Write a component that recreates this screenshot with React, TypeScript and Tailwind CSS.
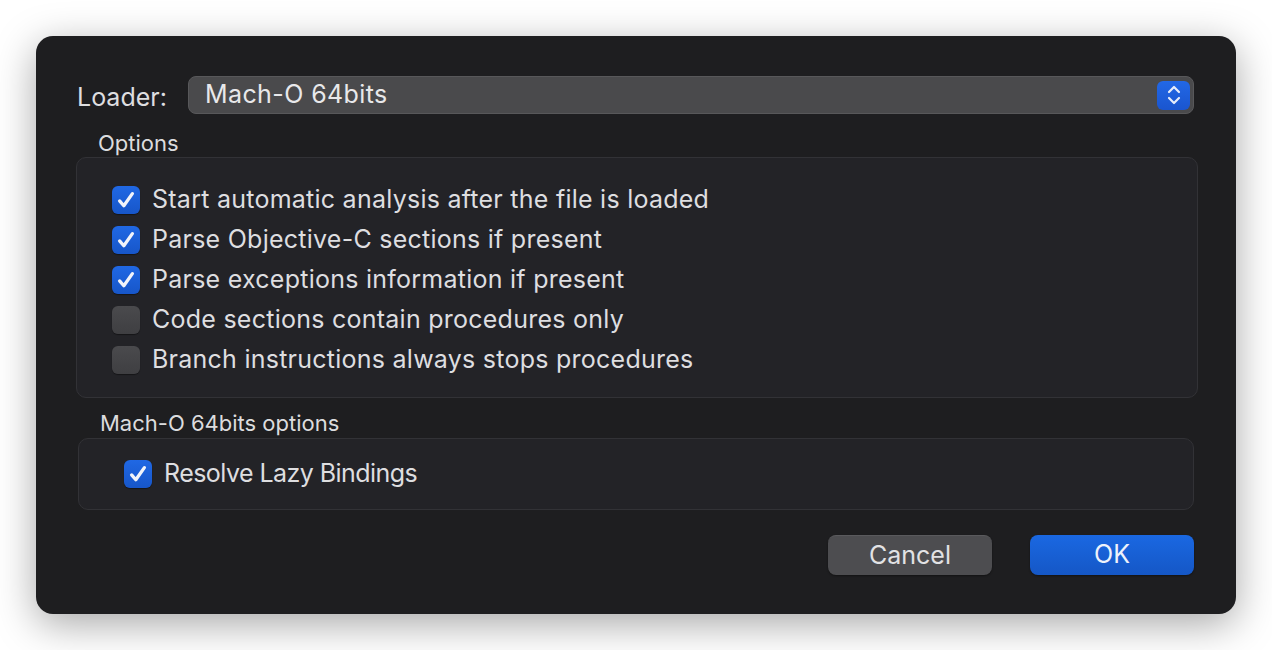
import React from "react";

const font = { fontFamily: "Inter, 'Noto Sans', sans-serif" };

const CheckBox: React.FC<{ checked: boolean }> = ({ checked }) =>
  checked ? (
    <div className="w-[28px] h-[28px] rounded-[6px] bg-gradient-to-b from-[#2068e4] to-[#1756c9] flex items-center justify-center shrink-0 shadow-[0_1px_1px_rgba(0,0,0,0.4)]">
      <svg width="22" height="22" viewBox="0 0 20 20" fill="none">
        <path d="M4.2 10.8l3.8 4.4L15.8 4.2" stroke="#f2f4fa" strokeWidth="3" strokeLinecap="round" strokeLinejoin="round" />
      </svg>
    </div>
  ) : (
    <div className="w-[28px] h-[28px] rounded-[6px] bg-gradient-to-b from-[#4a4a4d] to-[#3f3f42] shrink-0 shadow-[0_1px_1px_rgba(0,0,0,0.4)]" />
  );

const Option: React.FC<{ checked: boolean; label: string; tight?: boolean }> = ({ checked, label, tight }) => (
  <div className="flex items-center h-[40px] gap-[12px]">
    <CheckBox checked={checked} />
    <span className={tight ? "text-[25px] text-[#dedee0] tracking-[-0.55px]" : "text-[25px] text-[#dedee0] tracking-[0.25px]"}>
      {label}
    </span>
  </div>
);

export default function App() {
  return (
    <div className="w-[1272px] h-[650px] bg-white pt-[36px] pl-[36px]" style={font}>
      <div className="w-[1200px] h-[578px] bg-[#1e1e20] rounded-[17px] shadow-[0_10px_40px_rgba(0,0,0,0.35)] flex flex-col px-[40px] pt-[40px] pb-[39px]">
        {/* Loader row */}
        <div className="flex items-center h-[38px]">
          <span className="text-[25px] leading-[30px] text-[#dedee0] w-[112px] pl-[1px] mt-[4px]">Loader:</span>
          <div className="flex-1 h-[38px] rounded-[8px] bg-[#4a4a4c] border border-[#58585a] flex items-center pl-[16px] pr-[3px] mr-[2px]">
            <span className="flex-1 text-[25px] text-[#e8e8ea] tracking-[0.4px]">Mach-O 64bits</span>
            <div className="w-[33px] h-[29px] rounded-[6px] bg-gradient-to-b from-[#2268e6] to-[#1a55cf] flex items-center justify-center">
              <svg width="16" height="22" viewBox="0 0 16 22" fill="none">
                <path d="M3 8l5-5 5 5M3 14l5 5 5-5" stroke="#e6ecfa" strokeWidth="2.2" strokeLinecap="round" strokeLinejoin="round" />
              </svg>
            </div>
          </div>
        </div>

        {/* Options group */}
        <div className="mt-[16px] pl-[22px] text-[22px] text-[#dcdcde] leading-[26px]">Options</div>
        <div className="mt-[1px] h-[241px] rounded-[10px] bg-[#232327] border border-[#323236] pl-[35px] pt-[22px] mr-[-2px]">
          <Option checked label="Start automatic analysis after the file is loaded" />
          <Option checked label="Parse Objective-C sections if present" />
          <Option checked label="Parse exceptions information if present" />
          <Option checked={false} label="Code sections contain procedures only" />
          <Option checked={false} label="Branch instructions always stops procedures" />
        </div>

        {/* Mach-O options group */}
        <div className="mt-[12px] pl-[24px] text-[22px] text-[#dcdcde] leading-[26px]">Mach-O 64bits options</div>
        <div className="mt-[2px] h-[72px] rounded-[10px] bg-[#232327] border border-[#323236] ml-[2px] mr-[2px] flex items-center pl-[45px]">
          <Option checked tight label="Resolve Lazy Bindings" />
        </div>

        {/* Buttons */}
        <div className="mt-auto flex justify-end gap-[38px] mr-[2px]">
          <button className="w-[164px] h-[40px] rounded-[8px] bg-[#4d4d50] border-t border-[#5a5a5d] text-[25px] text-[#e2e2e4] shadow-[0_1px_2px_rgba(0,0,0,0.4)]">
            Cancel
          </button>
          <button className="w-[164px] h-[40px] rounded-[8px] bg-gradient-to-b from-[#1a68e2] to-[#1557c6] text-[25px] text-[#eef2fb] shadow-[0_1px_2px_rgba(0,0,0,0.4)]">
            OK
          </button>
        </div>
      </div>
    </div>
  );
}
